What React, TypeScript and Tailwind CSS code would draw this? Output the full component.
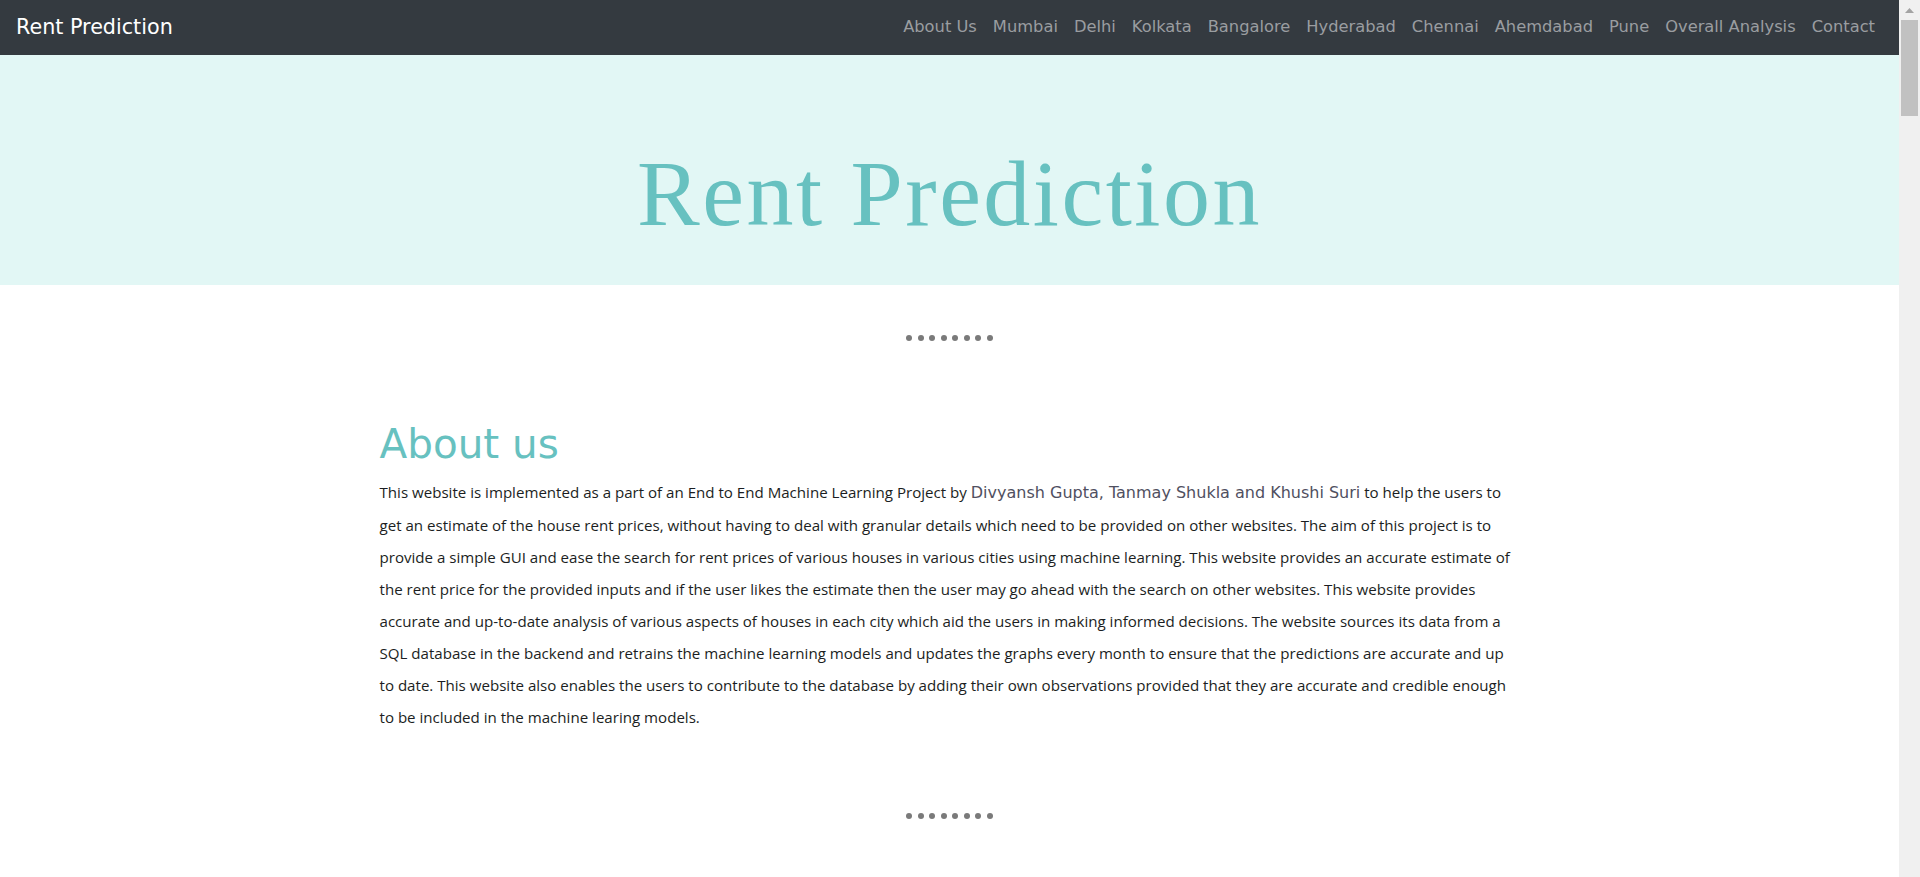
import React from 'react';

// --- Dados da navegação ---
const links = [
  'About Us',
  'Mumbai',
  'Delhi',
  'Kolkata',
  'Bangalore',
  'Hyderabad',
  'Chennai',
  'Ahemdabad',
  'Pune',
  'Overall Analysis',
  'Contact',
];

// Separador de pontinhos entre as seções
function Dots({ className }: { className?: string }) {
  return (
    <div className={`flex justify-center gap-[5.5px] ${className ?? ''}`}>
      {Array.from({ length: 8 }).map((_, i) => (
        <span key={i} className="block w-[6px] h-[6px] rounded-full bg-[#7a7a7a]" />
      ))}
    </div>
  );
}

// Barra de rolagem da janela (a página é bem comprida)
function Scrollbar() {
  return (
    <aside className="w-[21px] shrink-0 bg-[#f0f0f0] flex flex-col items-center">
      <div className="h-[20px] flex items-center justify-center">
        <svg width="9" height="5" viewBox="0 0 9 5">
          <path d="M4.5 0 L9 5 L0 5 Z" fill="#a3a3a3" />
        </svg>
      </div>
      <div className="w-[17px] h-[96px] bg-[#c1c1c1]" />
    </aside>
  );
}

export default function App() {
  return (
    <div className="flex h-screen overflow-hidden">
      <div className="flex-1 min-w-0 bg-white">
        <nav className="h-[55px] bg-[#343a40] flex items-center justify-between px-4 font-['DejaVu_Sans',sans-serif]">
          <a href="#" className="text-white text-[20.7px] leading-none">
            Rent Prediction
          </a>
          <ul className="flex items-center">
            {links.map(link => (
              <li key={link}>
                <a href="#" className="block px-2 text-[16.3px] text-[#9a9da0] leading-none">
                  {link}
                </a>
              </li>
            ))}
          </ul>
        </nav>

        <header className="h-[230px] bg-[#e2f7f5] flex justify-center pt-[91px]">
          <h1 className="font-['Liberation_Serif',serif] text-[94px] tracking-[2.5px] leading-none text-[#67c1c0]">
            Rent Prediction
          </h1>
        </header>

        <Dots className="mt-[50px]" />

        <section className="max-w-[1140px] mx-auto mt-[80px]">
          <h2 className="font-['DejaVu_Sans',sans-serif] text-[40.5px] leading-[47px] text-[#67c1c0] mb-2">
            About us
          </h2>
          <p className="font-['Open_Sans',sans-serif] text-[15.1px] leading-[32px] text-[#1b1e22] whitespace-nowrap">
            This website is implemented as a part of an End to End Machine Learning Project by{' '}
            <a href="#" className="font-['DejaVu_Sans',sans-serif] text-[16px] text-[#50505f]">
              Divyansh Gupta, Tanmay Shukla and Khushi Suri
            </a>{' '}
            to help the users to
            <br />
            get an estimate of the house rent prices, without having to deal with granular details which need to be provided on other websites. The aim of this project is to
            <br />
            provide a simple GUI and ease the search for rent prices of various houses in various cities using machine learning. This website provides an accurate estimate of
            <br />
            the rent price for the provided inputs and if the user likes the estimate then the user may go ahead with the search on other websites. This website provides
            <br />
            accurate and up-to-date analysis of various aspects of houses in each city which aid the users in making informed decisions. The website sources its data from a
            <br />
            SQL database in the backend and retrains the machine learning models and updates the graphs every month to ensure that the predictions are accurate and up
            <br />
            to date. This website also enables the users to contribute to the database by adding their own observations provided that they are accurate and credible enough
            <br />
            to be included in the machine learing models.
          </p>
        </section>

        <Dots className="mt-[80px]" />
      </div>
      <Scrollbar />
    </div>
  );
}
